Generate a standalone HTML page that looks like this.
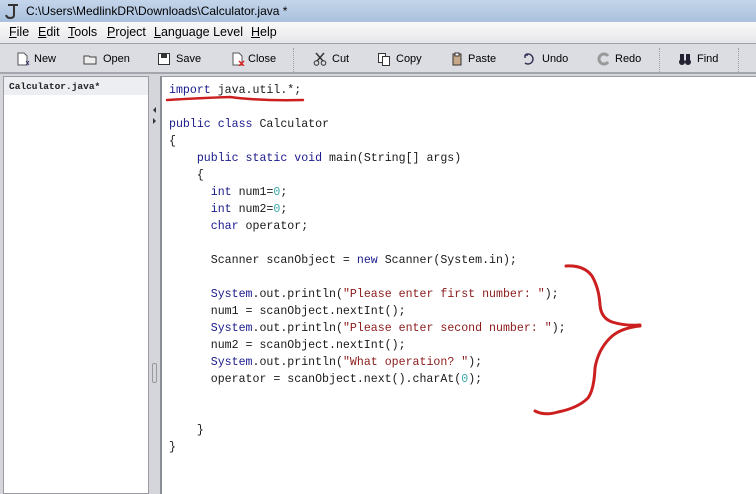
<!DOCTYPE html>
<html><head><meta charset="utf-8"><style>
*{margin:0;padding:0;box-sizing:border-box}
body{width:756px;height:494px;overflow:hidden;background:#d4d6dc;font-family:"Liberation Sans",sans-serif;position:relative}
.title{position:absolute;left:0;top:0;width:756px;height:22px;background:linear-gradient(#c4d5ea,#a9c1de);font-size:12px;color:#000}
.title span{position:absolute;left:26px;top:4px}
.menu{position:absolute;left:0;top:22px;width:756px;height:22px;background:linear-gradient(#fafafa,#e6e6ea);border-bottom:1px solid #a0a0a8;font-size:12.5px}
.menu span{position:absolute;top:3px}
.menu u{text-decoration:underline}
.tb{position:absolute;left:0;top:44px;width:756px;height:30px;background:#dcdde3;border-bottom:2px solid #a4a6ae;font-size:11px}
.tb .b{position:absolute;top:9px}
.ic{position:absolute;top:8px;width:14px;height:14px}
.sep{position:absolute;top:4px;height:24px;border-left:1px dotted #a0a0a0}
.left{position:absolute;left:3px;top:76px;width:146px;height:418px;background:#fff;border:1px solid #9a9aa0}
.left .h{height:18px;background:#eceef2;font-family:"Liberation Mono",monospace;font-size:9.5px;font-weight:bold;color:#222;padding:4px 0 0 5px}
.split{position:absolute;left:149px;top:76px;width:11px;height:418px;background:#d4d6dc}
.ed{position:absolute;left:160px;top:76px;width:596px;height:418px;background:#fff;border-left:2px solid #8c8e96;border-top:1px solid #9a9aa0}
pre{position:absolute;left:169px;top:82px;font-family:"Liberation Mono",monospace;font-size:11.6px;line-height:17px;color:#1a1a1a}
.k{color:#1a1a8c}.s{color:#8b1a1a}.n{color:#3aa8a8}
</style></head><body>
<div class="title"><svg style="position:absolute;left:4px;top:2px" width="16" height="18"><path d="M4 3h10M10 3v10q0 3-4 3q-3 0-4-3" stroke="#333" stroke-width="2" fill="none"/></svg><span>C:\Users\MedlinkDR\Downloads\Calculator.java *</span></div>
<div class="menu">
<span style="left:9px"><u>F</u>ile</span><span style="left:38px"><u>E</u>dit</span><span style="left:68px"><u>T</u>ools</span><span style="left:107px"><u>P</u>roject</span><span style="left:154px"><u>L</u>anguage Level</span><span style="left:251px"><u>H</u>elp</span>
</div>
<div class="tb">
<svg class="ic" style="left:16px" viewBox="0 0 14 14"><path d="M2 1h6l3 3v9H2z" fill="#fff" stroke="#555"/><path d="M10 9l3 4M13 9l-3 4" stroke="#336"/></svg><span class="b" style="left:34px">New</span>
<svg class="ic" style="left:83px" viewBox="0 0 14 14"><path d="M1 4h5l1 1h6v7H1z" fill="#eee" stroke="#444"/></svg><span class="b" style="left:103px">Open</span>
<svg class="ic" style="left:157px" viewBox="0 0 14 14"><rect x="1.5" y="1.5" width="11" height="11" fill="#fff" stroke="#333"/><rect x="4" y="2" width="6" height="4" fill="#333"/></svg><span class="b" style="left:176px">Save</span>
<svg class="ic" style="left:231px" viewBox="0 0 14 14"><path d="M2 1h6l3 3v9H2z" fill="#fff" stroke="#555"/><path d="M8 9l5 5M13 9l-5 5" stroke="#d22" stroke-width="1.5"/></svg><span class="b" style="left:248px">Close</span>
<div class="sep" style="left:293px"></div>
<svg class="ic" style="left:313px" viewBox="0 0 14 14"><path d="M3 1l7 8M11 1L4 9" stroke="#333" stroke-width="1.5"/><circle cx="3.5" cy="11" r="2.3" fill="none" stroke="#333"/><circle cx="10.5" cy="11" r="2.3" fill="none" stroke="#333"/></svg><span class="b" style="left:332px">Cut</span>
<svg class="ic" style="left:377px" viewBox="0 0 14 14"><rect x="1.5" y="1.5" width="7" height="9" fill="#fff" stroke="#333"/><rect x="5.5" y="4.5" width="7" height="9" fill="#fff" stroke="#333"/></svg><span class="b" style="left:396px">Copy</span>
<svg class="ic" style="left:450px" viewBox="0 0 14 14"><rect x="3" y="2" width="8" height="11" fill="#c8a88a" stroke="#333"/><rect x="5" y="1" width="4" height="3" fill="#fff" stroke="#333"/></svg><span class="b" style="left:468px">Paste</span>
<svg class="ic" style="left:522px" viewBox="0 0 14 14"><path d="M3 3a5 5 0 1 1 0 8M3 3l3 0M3 3l0 3" stroke="#335" stroke-width="1.5" fill="none"/></svg><span class="b" style="left:542px">Undo</span>
<svg class="ic" style="left:597px" viewBox="0 0 14 14"><path d="M11 4a5 5 0 1 0 0 6" stroke="#999" stroke-width="3" fill="none"/></svg><span class="b" style="left:615px">Redo</span>
<div class="sep" style="left:659px"></div>
<svg class="ic" style="left:678px" viewBox="0 0 14 14"><circle cx="4" cy="10" r="3" fill="#223"/><circle cx="10" cy="10" r="3" fill="#223"/><rect x="2" y="2" width="4" height="7" fill="#223"/><rect x="8" y="2" width="4" height="7" fill="#223"/></svg><span class="b" style="left:697px">Find</span>
<div class="sep" style="left:738px"></div>
</div>
<div class="left"><div class="h">Calculator.java*</div></div>
<div class="split"><svg style="position:absolute;left:3px;top:30px" width="6" height="20"><path d="M4 1L1 4l3 3z" fill="#333"/><path d="M1 12l3 3-3 3z" fill="#333"/></svg><div style="position:absolute;left:3px;top:287px;width:5px;height:20px;border:1px solid #999;border-radius:2px"></div></div>
<div class="ed"></div>
<pre><span class="k">import</span> java.util.*;

<span class="k">public class</span> Calculator
{
    <span class="k">public static void</span> main(String[] args)
    {
      <span class="k">int</span> num1=<span class="n">0</span>;
      <span class="k">int</span> num2=<span class="n">0</span>;
      <span class="k">char</span> operator;

      Scanner scanObject = <span class="k">new</span> Scanner(System.in);

      <span class="k">System</span>.out.println(<span class="s">"Please enter first number: "</span>);
      num1 = scanObject.nextInt();
      <span class="k">System</span>.out.println(<span class="s">"Please enter second number: "</span>);
      num2 = scanObject.nextInt();
      <span class="k">System</span>.out.println(<span class="s">"What operation? "</span>);
      operator = scanObject.next().charAt(<span class="n">0</span>);


    }
}</pre>
<svg style="position:absolute;left:0;top:0" width="756" height="494">
<path d="M167 100Q200 98 230 97Q260 101 303 100" stroke="#cc1f1f" stroke-width="2.5" fill="none" stroke-linecap="round"/>
<path d="M566 266Q584 265 592 276Q599 288 600 305Q601 318 612 322Q625 326 640 325M640 326Q620 328 610 338Q598 350 595 368Q594 390 588 398Q578 408 558 412Q545 416 535 411" stroke="#cc1f1f" stroke-width="3" fill="none" stroke-linecap="round" stroke-linejoin="round"/>
</svg>
</body></html>
